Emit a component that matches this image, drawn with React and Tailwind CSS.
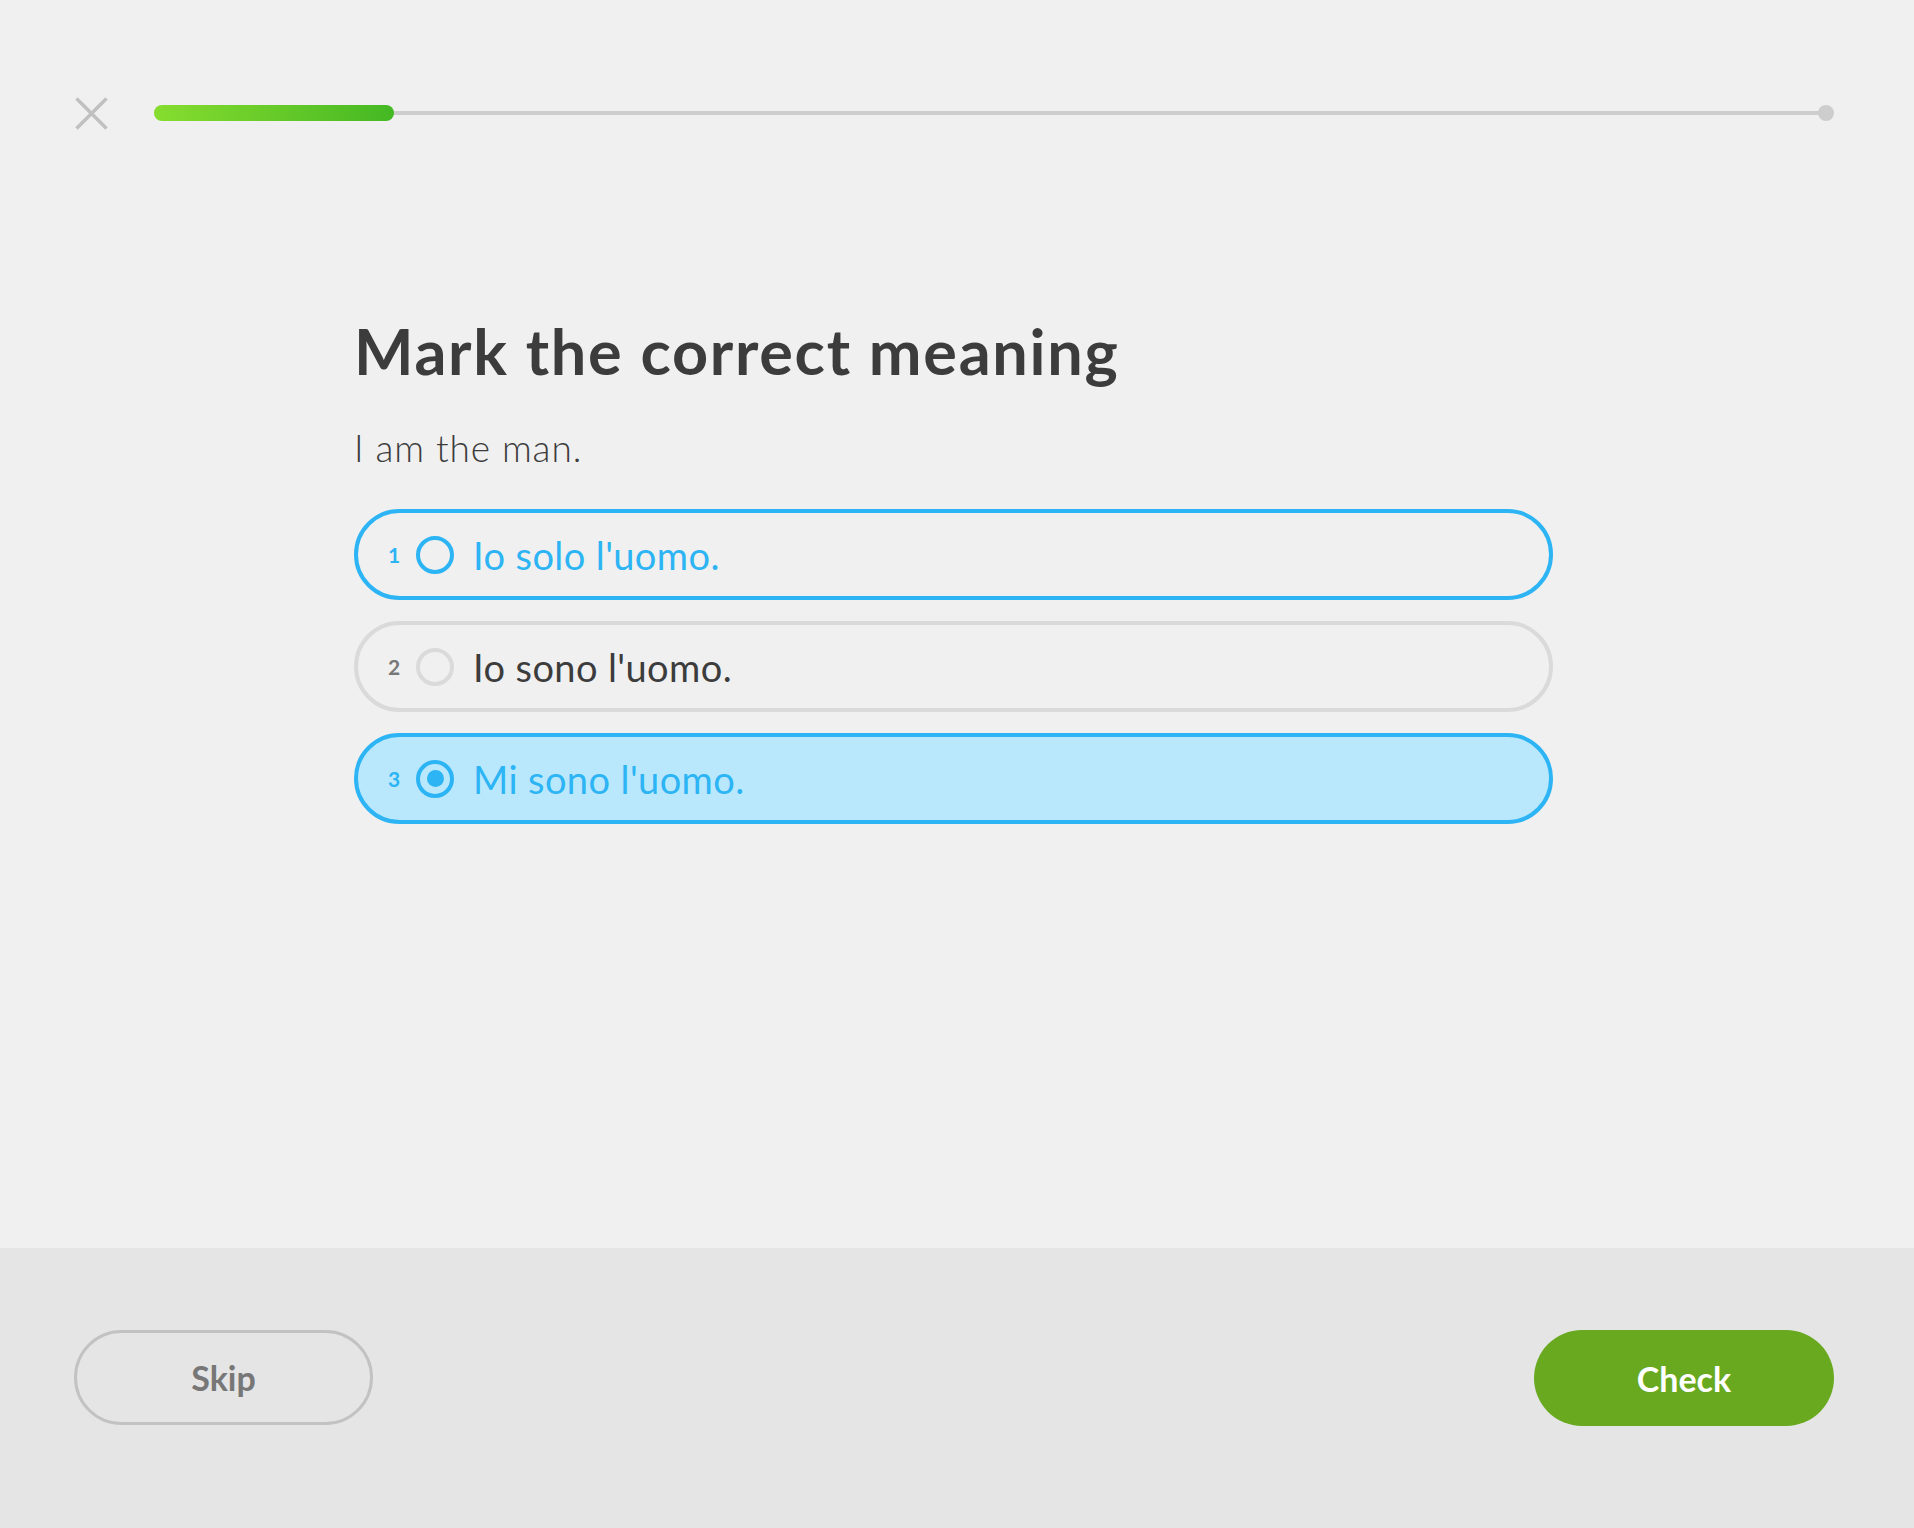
import React from "react";

const font = { fontFamily: "Lato, 'Open Sans', sans-serif" };

function Option({ n, text, state }) {
  const selected = state === "selected";
  const blue = state !== "idle";
  return (
    <div
      className={
        "flex items-center h-[91px] rounded-full border-[4px] pl-[30px] " +
        (selected
          ? "bg-[#b9e8fd] border-[#2cb4f4]"
          : blue
          ? "border-[#2cb4f4]"
          : "border-[#dadada]")
      }
    >
      <span
        className={
          "w-[14px] text-[21px] font-bold leading-none " +
          (blue ? "text-[#2cb4f4]" : "text-[#777777]")
        }
      >
        {n}
      </span>
      <span
        className={
          "ml-[14px] w-[38px] h-[38px] rounded-full border-[4px] flex items-center justify-center " +
          (blue ? "border-[#2cb4f4]" : "border-[#dadada]")
        }
      >
        {selected && <span className="w-[17px] h-[17px] rounded-full bg-[#2cb4f4]" />}
      </span>
      <span
        className={
          "ml-[19px] text-[38px] leading-none tracking-[0.4px] " +
          (blue ? "text-[#2cb4f4]" : "text-[#3c3c3c]")
        }
      >
        {text}
      </span>
    </div>
  );
}

export default function App() {
  return (
    <div className="w-full h-[1528px] flex flex-col bg-[#f0f0f0]" style={font}>
      <div className="flex items-center h-[226px] pl-[75px] pr-[80px]">
        <div className="flex items-center w-full h-[33px]">
          <svg width="33" height="33" viewBox="0 0 33 33" className="shrink-0">
            <path d="M1.5 1.5 L31.5 31.5 M31.5 1.5 L1.5 31.5" stroke="#c0c0c0" strokeWidth="3.5" />
          </svg>
          <div className="ml-[46px] flex-1 relative h-[16px] flex items-center">
            <div className="absolute left-0 right-[8px] h-[4px] bg-[#cdcdcd]" />
            <div className="absolute right-0 w-[16px] h-[16px] rounded-full bg-[#cdcdcd]" />
            <div className="relative w-[240px] h-[16px] rounded-full bg-gradient-to-r from-[#86dd2f] to-[#43b823]" />
          </div>
        </div>
      </div>
      <div className="flex-1 ml-[354px] w-[1199px] flex flex-col">
        <h1 className="text-[63px] font-bold text-[#3c3c3c] leading-none mt-[93px] tracking-[1.7px]">
          Mark the correct meaning
        </h1>
        <p className="text-[37px] font-light text-[#3c3c3c] leading-none mt-[47px] tracking-[0.9px]">I am the man.</p>
        <div className="mt-[43px] flex flex-col gap-[21px]">
          <Option n="1" text="Io solo l'uomo." state="hover" />
          <Option n="2" text="Io sono l'uomo." state="idle" />
          <Option n="3" text="Mi sono l'uomo." state="selected" />
        </div>
      </div>
      <div className="h-[280px] bg-[#e5e5e5] flex items-start justify-between pl-[74px] pr-[80px] pt-[82px]">
        <button className="w-[299px] h-[95px] rounded-full border-[3px] border-[#c2c2c2] text-[34px] font-bold text-[#777777]">
          Skip
        </button>
        <button className="w-[300px] h-[96px] rounded-full bg-[#68a920] text-[34px] font-bold text-white">
          Check
        </button>
      </div>
    </div>
  );
}
